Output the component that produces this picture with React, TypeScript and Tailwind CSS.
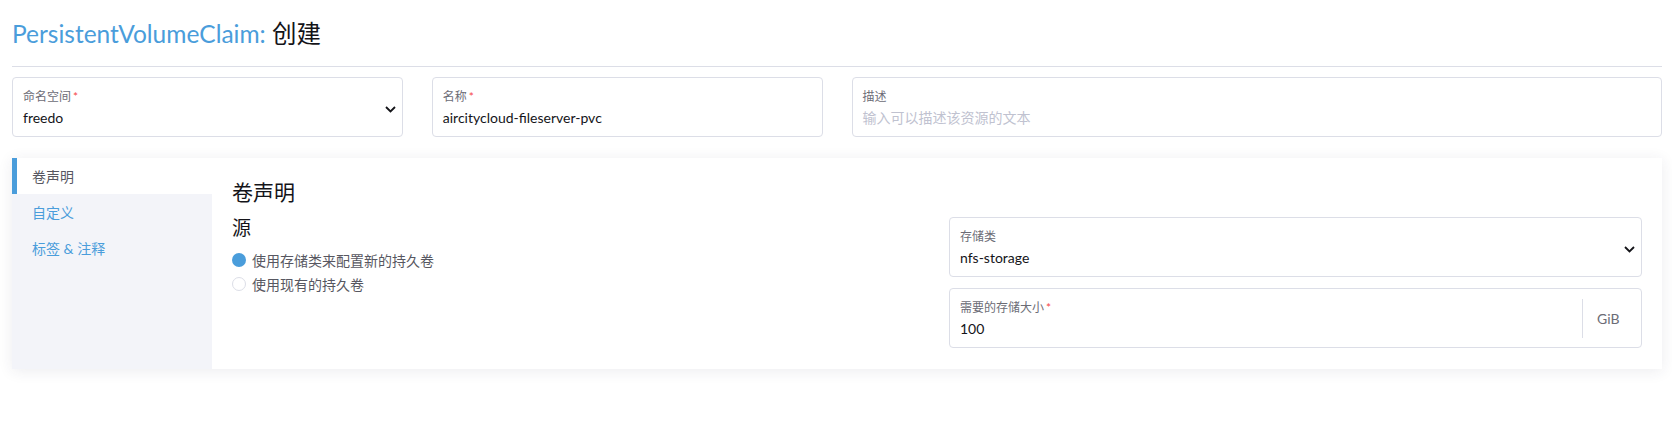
import React from "react";

const font = { fontFamily: 'Lato, "Noto Sans CJK SC", sans-serif' };

function Chevron() {
  return (
    <svg width="11" height="7" viewBox="0 0 11 7" className="shrink-0">
      <path d="M1 1 L5.5 5.5 L10 1" fill="none" stroke="#141419" strokeWidth="1.8" />
    </svg>
  );
}

function Field({
  label,
  required,
  value,
  placeholder,
  select,
  addon,
}: {
  label: string;
  required?: boolean;
  value?: string;
  placeholder?: string;
  select?: boolean;
  addon?: string;
}) {
  return (
    <div className="h-[60px] rounded-[4px] border border-[#dcdee7] bg-white flex items-center">
      <div className="flex-1 min-w-0 h-full pl-[10px] pt-[11px]">
        <div className="text-[12px] leading-[16px] text-[#6c6c76]">
          {label}
          {required && <span className="text-[#f64747] ml-[2px]">*</span>}
        </div>
        <div className={`mt-[3px] text-[14px] leading-[20px] ${value ? "text-[#141419]" : "text-[#c0c2d0]"}`}>
          {value ?? placeholder}
        </div>
      </div>
      {select && (
        <div className="pr-[6px] pt-[4px]">
          <Chevron />
        </div>
      )}
      {addon && (
        <div className="h-[39px] border-l border-[#dcdee7] w-[59px] pl-[14px] flex items-center text-[14px] text-[#6c6c76] mt-[1px]">
          {addon}
        </div>
      )}
    </div>
  );
}

export default function App() {
  return (
    <div className="bg-white w-[1672px] h-[436px] px-[12px] text-[#141419]" style={font}>
      <div className="h-[67px] flex items-center border-b border-[#dcdee7] mr-[-2px]">
        <h1 className="text-[24.5px] leading-[29px] pt-[1px]">
          <span className="text-[#4a9ddb]">PersistentVolumeClaim:</span>{" "}
          <span className="text-[#141419]">创建</span>
        </h1>
      </div>

      <div className="grid grid-cols-4 gap-x-[29px] mt-[10px] w-[1650px]">
        <Field label="命名空间" required value="freedo" select />
        <Field label="名称" required value="aircitycloud-fileserver-pvc" />
        <div className="col-span-2">
          <Field label="描述" placeholder="输入可以描述该资源的文本" />
        </div>
      </div>

      <div className="mt-[21px] w-[1650px] flex bg-white shadow-[0_2px_14px_rgba(40,40,80,0.09)]">
        <div className="w-[200px] shrink-0 bg-[#f3f4f9]">
          <div className="h-[36px] bg-white border-l-[5px] border-[#4a9ddb] pl-[15px] flex items-center text-[14px] text-[#575761]">
            卷声明
          </div>
          <div className="h-[36px] pl-[20px] flex items-center text-[14px] text-[#4a9ddb]">自定义</div>
          <div className="h-[36px] pl-[20px] flex items-center text-[14px] text-[#4a9ddb]">标签 &amp; 注释</div>
        </div>
        <div className="flex-1 px-[20px] pt-[20px] pb-[21px]">
          <h2 className="text-[21px] leading-[28px]">卷声明</h2>
          <div className="mt-[11px] grid grid-cols-2 gap-x-[24px]">
            <div>
              <h3 className="text-[19px] leading-[22px]">源</h3>
              <div className="mt-[9px]">
                <div className="h-[24px] flex items-center gap-[6px] text-[14px] text-[#575761]">
                  <span className="w-[14px] h-[14px] rounded-full bg-[#4a9ddb] inline-block"></span>
                  使用存储类来配置新的持久卷
                </div>
                <div className="h-[24px] flex items-center gap-[6px] text-[14px] text-[#575761]">
                  <span className="w-[14px] h-[14px] rounded-full border border-[#dcdee7] bg-white inline-block"></span>
                  使用现有的持久卷
                </div>
              </div>
            </div>
            <div className="flex flex-col gap-[11px]">
              <Field label="存储类" value="nfs-storage" select />
              <Field label="需要的存储大小" required value="100" addon="GiB" />
            </div>
          </div>
        </div>
      </div>
    </div>
  );
}
